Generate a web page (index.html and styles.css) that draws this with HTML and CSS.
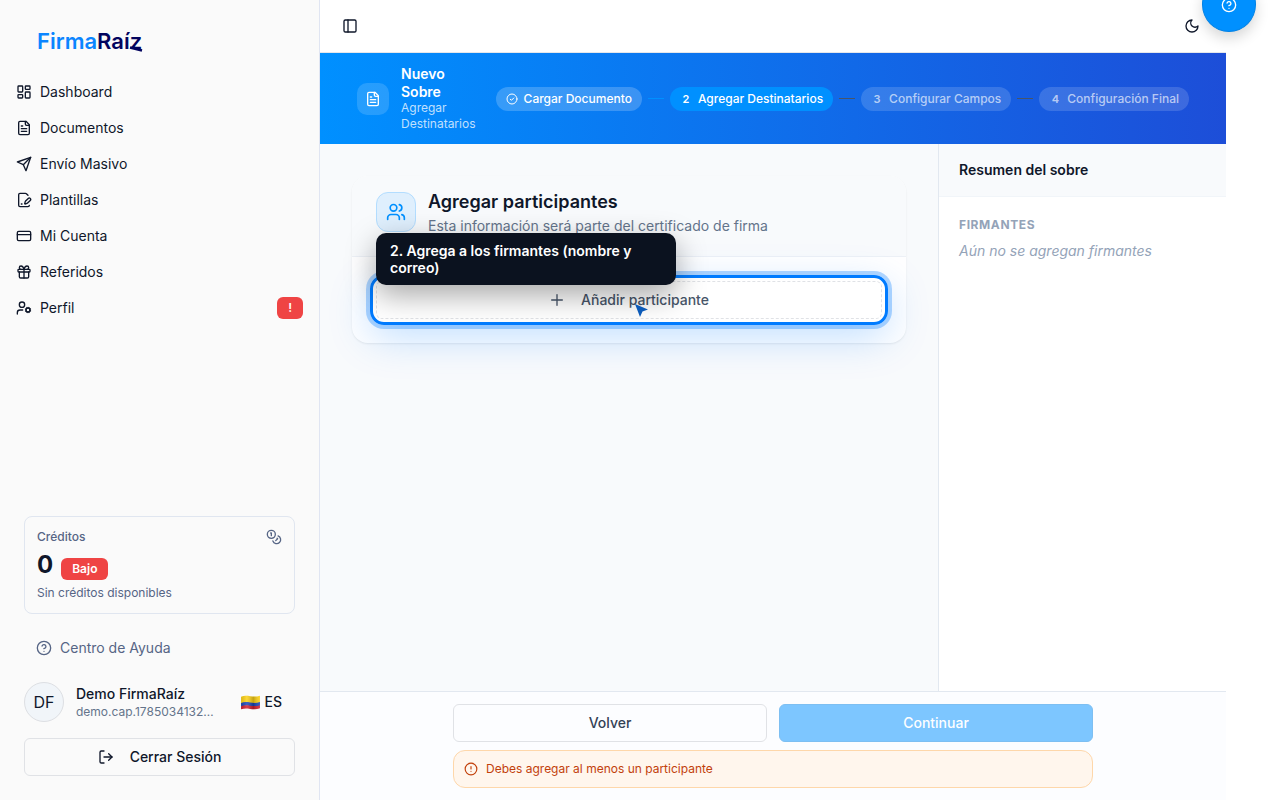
FILE: index.html
```html
<!DOCTYPE html>
<html lang="es">
<head>
  <meta charset="UTF-8" />
  <meta name="viewport" content="width=device-width, initial-scale=1.0"/>
  <title>FirmaRaíz - Nuevo Sobre</title>
  <link rel="stylesheet" href="styles.css">
</head>
<body>
  <div class="app">
    <aside class="sidebar">
      <a class="logo" href="#"><span class="logo-firma">Firma</span><span class="logo-raiz">Raíz</span><svg class="logo-tail" viewBox="0 0 14 6"><path d="M1 1.500 13 4.500" fill="none" stroke="#03045e" stroke-width="2.400"/></svg></a>

      <nav class="menu">
        <a href="#" class="menu-item">
          <svg class="icon" viewBox="0 0 24 24"><rect width="7" height="9" x="3" y="3" rx="1"/><rect width="7" height="5" x="14" y="3" rx="1"/><rect width="7" height="9" x="14" y="12" rx="1"/><rect width="7" height="5" x="3" y="16" rx="1"/></svg>
          <span>Dashboard</span>
        </a>
        <a href="#" class="menu-item">
          <svg class="icon" viewBox="0 0 24 24"><path d="M15 2H6a2 2 0 0 0-2 2v16a2 2 0 0 0 2 2h12a2 2 0 0 0 2-2V7Z"/><path d="M14 2v4a2 2 0 0 0 2 2h4"/><path d="M10 9H8"/><path d="M16 13H8"/><path d="M16 17H8"/></svg>
          <span>Documentos</span>
        </a>
        <a href="#" class="menu-item">
          <svg class="icon" viewBox="0 0 24 24"><path d="m22 2-7 20-4-9-9-4Z"/><path d="M22 2 11 13"/></svg>
          <span>Envío Masivo</span>
        </a>
        <a href="#" class="menu-item">
          <svg class="icon" viewBox="0 0 24 24"><path d="m18 5-2.414-2.414A2 2 0 0 0 14.172 2H6a2 2 0 0 0-2 2v16a2 2 0 0 0 2 2h12a2 2 0 0 0 2-2"/><path d="M21.378 12.626a1 1 0 0 0-3.004-3.004l-4.01 4.012a2 2 0 0 0-.506.854l-.837 2.87a.5.5 0 0 0 .62.62l2.87-.837a2 2 0 0 0 .854-.506z"/><path d="M8 18h1"/></svg>
          <span>Plantillas</span>
        </a>
        <a href="#" class="menu-item">
          <svg class="icon" viewBox="0 0 24 24"><rect width="20" height="14" x="2" y="5" rx="2"/><path d="M2 10h20"/></svg>
          <span>Mi Cuenta</span>
        </a>
        <a href="#" class="menu-item">
          <svg class="icon" viewBox="0 0 24 24"><rect x="3" y="8" width="18" height="4" rx="1"/><path d="M12 8v13"/><path d="M19 12v7a2 2 0 0 1-2 2H7a2 2 0 0 1-2-2v-7"/><path d="M7.5 8a2.5 2.5 0 0 1 0-5A4.8 8 0 0 1 12 8a4.8 8 0 0 1 4.5-5 2.5 2.5 0 0 1 0 5"/></svg>
          <span>Referidos</span>
        </a>
        <a href="#" class="menu-item">
          <svg class="icon" viewBox="0 0 24 24"><circle cx="18" cy="15" r="3"/><circle cx="9" cy="7" r="4"/><path d="M10 15H6a4 4 0 0 0-4 4v2"/><path d="m21.7 16.4-.9-.3"/><path d="m15.2 13.9-.9-.3"/><path d="m16.6 18.7.3-.9"/><path d="m19.1 12.2.3-.9"/><path d="m19.6 18.7-.4-1"/><path d="m16.8 12.3-.4-1"/><path d="m14.3 16.6 1-.4"/><path d="m20.7 13.8 1-.4"/></svg>
          <span>Perfil</span>
          <span class="badge menu-badge">!</span>
        </a>
      </nav>

      <div class="sidebar-footer">
        <section class="credits">
          <div class="credits-top">
            <span>Créditos</span>
            <svg class="icon" viewBox="0 0 24 24"><circle cx="8" cy="8" r="6"/><path d="M18.09 10.37A6 6 0 1 1 10.34 18"/><path d="M7 6h1v4"/><path d="m16.71 13.88.7.71-2.82 2.82"/></svg>
          </div>
          <div class="credits-amount">
            <strong>0</strong>
            <span class="badge">Bajo</span>
          </div>
          <p>Sin créditos disponibles</p>
        </section>

        <a href="#" class="help-link">
          <svg class="icon" viewBox="0 0 24 24"><circle cx="12" cy="12" r="10"/><path d="M9.09 9a3 3 0 0 1 5.83 1c0 2-3 3-3 3"/><path d="M12 17h.01"/></svg>
          Centro de Ayuda
        </a>

        <div class="user">
          <span class="avatar">DF</span>
          <div class="user-info">
            <span class="user-name">Demo FirmaRaíz</span>
            <span class="user-mail">demo.cap.1785034132…</span>
          </div>
          <button class="lang-btn" type="button">
            <svg class="flag" viewBox="0 0 20 16">
              <defs>
                <linearGradient id="wave" x1="0" x2="1">
                  <stop offset="0" stop-color="#000" stop-opacity=".12"/>
                  <stop offset=".3" stop-color="#fff" stop-opacity=".15"/>
                  <stop offset=".65" stop-color="#000" stop-opacity=".22"/>
                  <stop offset="1" stop-color="#fff" stop-opacity=".1"/>
                </linearGradient>
              </defs>
              <path fill="#fcd116" d="M1 2.500C7 0 12 4 19 1.500V8C12 10.500 7 6.500 1 9Z"/>
              <path fill="#1a47b8" d="M1 8.500C7 6 12 10 19 7.500V11C12 13.500 7 9.500 1 12Z"/>
              <path fill="#d0202e" d="M1 11.500C7 9 12 13 19 10.500V13.500C12 16 7 12 1 14.500Z"/>
              <path fill="url(#wave)" d="M1 2.500C7 0 12 4 19 1.500V13.500C12 16 7 12 1 14.500Z"/>
            </svg>
            ES
          </button>
        </div>

        <button class="btn btn-outline logout-btn" type="button">
          <svg class="icon" viewBox="0 0 24 24"><path d="M9 21H5a2 2 0 0 1-2-2V5a2 2 0 0 1 2-2h4"/><path d="m16 17 5-5-5-5"/><path d="M21 12H9"/></svg>
          Cerrar Sesión
        </button>
      </div>
    </aside>

    <div class="main">
      <header class="topbar">
        <button class="icon-btn" type="button" aria-label="Contraer menú">
          <svg class="icon" viewBox="0 0 24 24"><rect width="18" height="18" x="3" y="3" rx="2"/><path d="M9 3v18"/></svg>
        </button>
        <button class="icon-btn" type="button" aria-label="Cambiar tema">
          <svg class="icon" viewBox="0 0 24 24"><path d="M12 3a6 6 0 0 0 9 9 9 9 0 1 1-9-9Z"/></svg>
        </button>
      </header>

      <div class="banner">
        <div class="banner-title">
          <span class="banner-icon">
            <svg class="icon" viewBox="0 0 24 24"><path d="M15 2H6a2 2 0 0 0-2 2v16a2 2 0 0 0 2 2h12a2 2 0 0 0 2-2V7Z"/><path d="M14 2v4a2 2 0 0 0 2 2h4"/><path d="M10 9H8"/><path d="M16 13H8"/><path d="M16 17H8"/></svg>
          </span>
          <div>
            <h1>Nuevo Sobre</h1>
            <p>Agregar Destinatarios</p>
          </div>
        </div>
        <ol class="steps">
          <li class="step done">
            <svg class="icon" viewBox="0 0 24 24"><circle cx="12" cy="12" r="10"/><path d="m8.500 12.500 2.500 2 4.500-4.500"/></svg>
            Cargar Documento
          </li>
          <li class="step-line line-done"></li>
          <li class="step active"><b>2</b>Agregar Destinatarios</li>
          <li class="step-line"></li>
          <li class="step"><b>3</b>Configurar Campos</li>
          <li class="step-line"></li>
          <li class="step"><b>4</b>Configuración Final</li>
        </ol>
      </div>

      <div class="content">
        <main class="workspace">
          <section class="card">
            <div class="card-header">
              <span class="card-icon">
                <svg class="icon" viewBox="0 0 24 24"><path d="M16 21v-2a4 4 0 0 0-4-4H6a4 4 0 0 0-4 4v2"/><circle cx="9" cy="7" r="4"/><path d="M22 21v-2a4 4 0 0 0-3-3.87"/><path d="M16 3.13a4 4 0 0 1 0 7.75"/></svg>
              </span>
              <div>
                <h2>Agregar participantes</h2>
                <p>Esta información será parte del certificado de firma</p>
              </div>
            </div>
            <div class="card-body">
              <div class="tour-target">
                <button class="btn add-btn" type="button">
                  <svg class="icon" viewBox="0 0 24 24"><path d="M4 12h16"/><path d="M12 4v16"/></svg>
                  Añadir participante
                </button>
                <div class="tour-ring"></div>
                <div class="tour-tip" role="tooltip">2. Agrega a los firmantes (nombre y correo)</div>
                <svg class="tour-cursor" viewBox="0 0 14 14"><path fill="#0b5ab8" d="M0 0 13 5.500 7.500 7.500 5 13Z"/></svg>
              </div>
            </div>
          </section>
        </main>

        <aside class="summary">
          <h2>Resumen del sobre</h2>
          <div class="summary-body">
            <h3>Firmantes</h3>
            <p>Aún no se agregan firmantes</p>
          </div>
        </aside>
      </div>

      <footer class="actions">
        <div class="actions-inner">
          <div class="actions-row">
            <button class="btn btn-outline" type="button">Volver</button>
            <button class="btn btn-primary" type="button" disabled>Continuar</button>
          </div>
          <div class="alert" role="alert">
            <svg class="icon" viewBox="0 0 24 24"><circle cx="12" cy="12" r="10"/><path d="M12 8v4"/><path d="M12 16h.01"/></svg>
            Debes agregar al menos un participante
          </div>
        </div>
      </footer>
    </div>

    <button class="help-fab" type="button" aria-label="Ayuda">
      <svg class="icon" viewBox="0 0 24 24"><circle cx="12" cy="12" r="10"/><path d="M9.09 9a3 3 0 0 1 5.83 1c0 2-3 3-3 3"/><path d="M12 17h.01"/></svg>
    </button>
  </div>
</body>
</html>
```
FILE: styles.css
```css
* {
  margin: 0;
  padding: 0;
  box-sizing: border-box;
}
body {
  font-family: Inter, "Liberation Sans", sans-serif;
  font-size: 14px;
  line-height: 20px;
  color: #0f172a;
  background: #fff;
}
button {
  font: inherit;
  color: inherit;
  background: none;
  border: none;
  cursor: pointer;
}
a {
  color: inherit;
  text-decoration: none;
}
.icon {
  width: 16px;
  height: 16px;
  flex-shrink: 0;
  fill: none;
  stroke: currentColor;
  stroke-width: 2;
  stroke-linecap: round;
  stroke-linejoin: round;
}
.app {
  position: relative;
  display: flex;
  min-height: 100vh;
  padding-right: 54px; /* room for the help button */
  overflow: hidden;
}

/* Sidebar */
.sidebar {
  width: 320px;
  flex-shrink: 0;
  display: flex;
  flex-direction: column;
  background: #fafafa;
  border-right: 1px solid #e0e5f2;
}
.logo {
  position: relative;
  align-self: flex-start;
  margin: 25px 37px 0;
  font-size: 22px;
  line-height: 32px;
}
.logo-firma {
  font-weight: 600;
  color: #0a85ff;
}
.logo-raiz {
  font-weight: 600;
  color: #03045e;
}
.logo-tail {
  position: absolute;
  right: -1px;
  bottom: 5px;
  width: 14px;
  height: 6px;
}
.menu {
  display: flex;
  flex-direction: column;
  gap: 4px;
  padding: 19px 16px 0;
}
.menu-item {
  display: flex;
  align-items: center;
  gap: 8px;
  height: 32px;
}
.badge {
  padding: 3px 11px;
  font-size: 12px;
  line-height: 16px;
  font-weight: 600;
  color: #fff;
  background: #ef4444;
  border-radius: 6px;
}
.menu-badge {
  margin-left: auto;
}
.sidebar-footer {
  display: flex;
  flex-direction: column;
  gap: 16px;
  margin-top: auto;
  padding: 24px;
}
.credits {
  padding: 12px;
  font-size: 12px;
  line-height: 16px;
  color: #566585;
  border: 1px solid #e0e6f0;
  border-radius: 8px;
}
.credits-top {
  display: flex;
  justify-content: space-between;
  align-items: center;
  font-weight: 500;
}
.credits-amount {
  display: flex;
  align-items: baseline;
  gap: 8px;
  margin: 4px 0;
}
.credits-amount strong {
  font-size: 24px;
  line-height: 32px;
  color: #0f172a;
}
.help-link {
  display: flex;
  align-items: center;
  gap: 8px;
  height: 36px;
  padding: 0 12px;
  color: #566585;
}
.user {
  display: flex;
  align-items: center;
  gap: 12px;
}
.avatar {
  display: flex;
  align-items: center;
  justify-content: center;
  width: 40px;
  height: 40px;
  flex-shrink: 0;
  font-size: 16px;
  background: #f1f5f9;
  border: 1px solid #dddfe3;
  border-radius: 50%;
}
.user-info {
  flex: 1;
  min-width: 0;
  display: flex;
  flex-direction: column;
}
.user-name {
  font-weight: 500;
}
.user-mail {
  font-size: 12px;
  line-height: 16px;
  color: #64748b;
  white-space: nowrap;
}
.lang-btn {
  display: flex;
  align-items: center;
  gap: 4px;
  padding: 8px 13px;
  font-weight: 500;
}
.flag {
  width: 21px;
  height: 17px;
}

/* Buttons */
.btn {
  display: flex;
  align-items: center;
  justify-content: center;
  gap: 16px;
  width: 100%;
  height: 38px;
  font-weight: 500;
  border: 1px solid transparent;
  border-radius: 6px;
}
.btn-outline {
  border-color: #e0e2e6;
}
.btn-primary {
  color: #fff;
  background: #0090ff;
  border-color: #0082e6;
}
.btn-primary:disabled {
  opacity: 0.5;
  cursor: not-allowed;
}

/* Main column */
.main {
  flex: 1;
  min-width: 0;
  display: flex;
  flex-direction: column;
}
.topbar {
  display: flex;
  justify-content: space-between;
  padding: 12px 20px 12px 16px;
  border-bottom: 1px solid #e5e7eb;
}
.icon-btn {
  display: flex;
  align-items: center;
  justify-content: center;
  width: 28px;
  height: 28px;
}
.banner {
  display: flex;
  align-items: center;
  justify-content: space-between;
  gap: 20px;
  padding: 12px 37px;
  color: #fff;
  background: linear-gradient(to right, #0090ff, #1d4ed8);
}
.banner-title {
  display: flex;
  align-items: center;
  gap: 12px;
}
.banner-icon {
  display: flex;
  align-items: center;
  justify-content: center;
  width: 32px;
  height: 32px;
  flex-shrink: 0;
  background: rgba(255, 255, 255, 0.15);
  border-radius: 10px;
}
.banner h1 {
  font-size: 14px;
  line-height: 1.25;
  font-weight: 600;
}
.banner p {
  font-size: 12px;
  line-height: 16px;
  color: rgba(255, 255, 255, 0.75);
}
.steps {
  display: flex;
  align-items: center;
  gap: 6px;
  flex-shrink: 0;
  list-style: none;
}
.step {
  display: flex;
  align-items: center;
  gap: 6px;
  height: 24px;
  padding: 0 10px;
  font-size: 12px;
  font-weight: 500;
  white-space: nowrap;
  color: rgba(255, 255, 255, 0.65);
  background: rgba(255, 255, 255, 0.15);
  border-radius: 12px;
}
.step b {
  width: 12px;
  font-size: 11px;
  font-weight: 600;
  text-align: center;
}
.step .icon {
  width: 12px;
  height: 12px;
}
.step.done {
  color: #fff;
  background: rgba(255, 255, 255, 0.2);
}
.step.active {
  color: #fff;
  background: #0090ff;
}
.step-line {
  width: 16px;
  height: 1px;
  background: #475569;
}
.line-done {
  background: #0090ff;
}
.content {
  flex: 1;
  display: flex;
}
.workspace {
  flex: 1;
  min-width: 0;
  padding: 32px;
  background: #f8fafc;
}
.card {
  background: #fff;
  border-radius: 16px;
  box-shadow: 0 1px 2px rgba(15, 23, 42, 0.08);
}
.card-header {
  display: flex;
  gap: 12px;
  padding: 16px 24px 20px;
  background: #f8fafc;
  border-bottom: 1px solid #edf1f6;
  border-radius: 16px 16px 0 0;
}
.card-icon {
  display: flex;
  align-items: center;
  justify-content: center;
  width: 40px;
  height: 40px;
  color: #0090ff;
  background: #dfeffd;
  border: 1px solid #b3ddff;
  border-radius: 12px;
}
.card-icon .icon {
  width: 20px;
  height: 20px;
}
.card-header h2 {
  font-size: 18px;
  line-height: 20px;
  font-weight: 600;
}
.card-header p {
  margin-top: 4px;
  color: #64748b;
}
.card-body {
  padding: 24px;
}

/* Guided tour */
.tour-target {
  position: relative;
}
.add-btn {
  color: #475569;
  background: #fff;
  border: 1px dashed #e0e2e6;
  border-radius: 6px;
}
.tour-ring {
  position: absolute;
  inset: -6px;
  border: 3px solid #007bff;
  border-radius: 14px;
  box-shadow: 0 0 0 4px rgba(0, 123, 255, 0.3), 0 12px 40px rgba(0, 123, 255, 0.25);
  pointer-events: none;
}
.tour-tip {
  position: absolute;
  top: -48px;
  left: 0;
  width: 300px;
  padding: 9px 14px;
  line-height: 17px;
  font-weight: 600;
  color: #fff;
  background: #0b121f;
  border-radius: 10px;
  box-shadow: 0 10px 30px rgba(0, 0, 0, 0.35);
}
.tour-cursor {
  position: absolute;
  top: 23px;
  left: calc(50% + 6px);
  width: 14px;
  height: 14px;
}

/* Summary */
.summary {
  width: 288px;
  flex-shrink: 0;
  border-left: 1px solid #e2e8f0;
}
.summary h2 {
  padding: 16px 20px;
  font-size: 14px;
  line-height: 20px;
  font-weight: 600;
  background: #f8fafc;
  border-bottom: 1px solid #f1f5f9;
}
.summary-body {
  padding: 20px;
  color: #94a3b8;
}
.summary h3 {
  margin-bottom: 8px;
  font-size: 12px;
  line-height: 16px;
  font-weight: 700;
  letter-spacing: 0.05em;
  text-transform: uppercase;
}
.summary p {
  font-style: italic;
}

/* Footer */
.actions {
  padding: 12px;
  background: #fcfdff;
  border-top: 1px solid #e2e8f0;
}
.actions-inner {
  display: flex;
  flex-direction: column;
  gap: 8px;
  max-width: 640px;
  margin: 0 auto;
}
.actions-row {
  display: grid;
  grid-template-columns: 1fr 1fr;
  gap: 12px;
}
.actions .btn-outline {
  color: #334155;
}
.alert {
  display: flex;
  align-items: center;
  gap: 8px;
  padding: 10px;
  font-size: 12px;
  line-height: 16px;
  color: #c2410c;
  background: #fff6ed;
  border: 1px solid #fed7aa;
  border-radius: 12px;
}
.alert .icon {
  width: 14px;
  height: 14px;
}

/* Floating help button, partly above the window edge */
.help-fab {
  position: absolute;
  top: -23px;
  right: 24px;
  display: flex;
  align-items: center;
  justify-content: center;
  width: 54px;
  height: 55px;
  color: #fff;
  background: #0090ff;
  border: 1px solid #0082e6;
  border-radius: 50%;
  box-shadow: 0 6px 14px rgba(0, 0, 0, 0.16);
}
```
